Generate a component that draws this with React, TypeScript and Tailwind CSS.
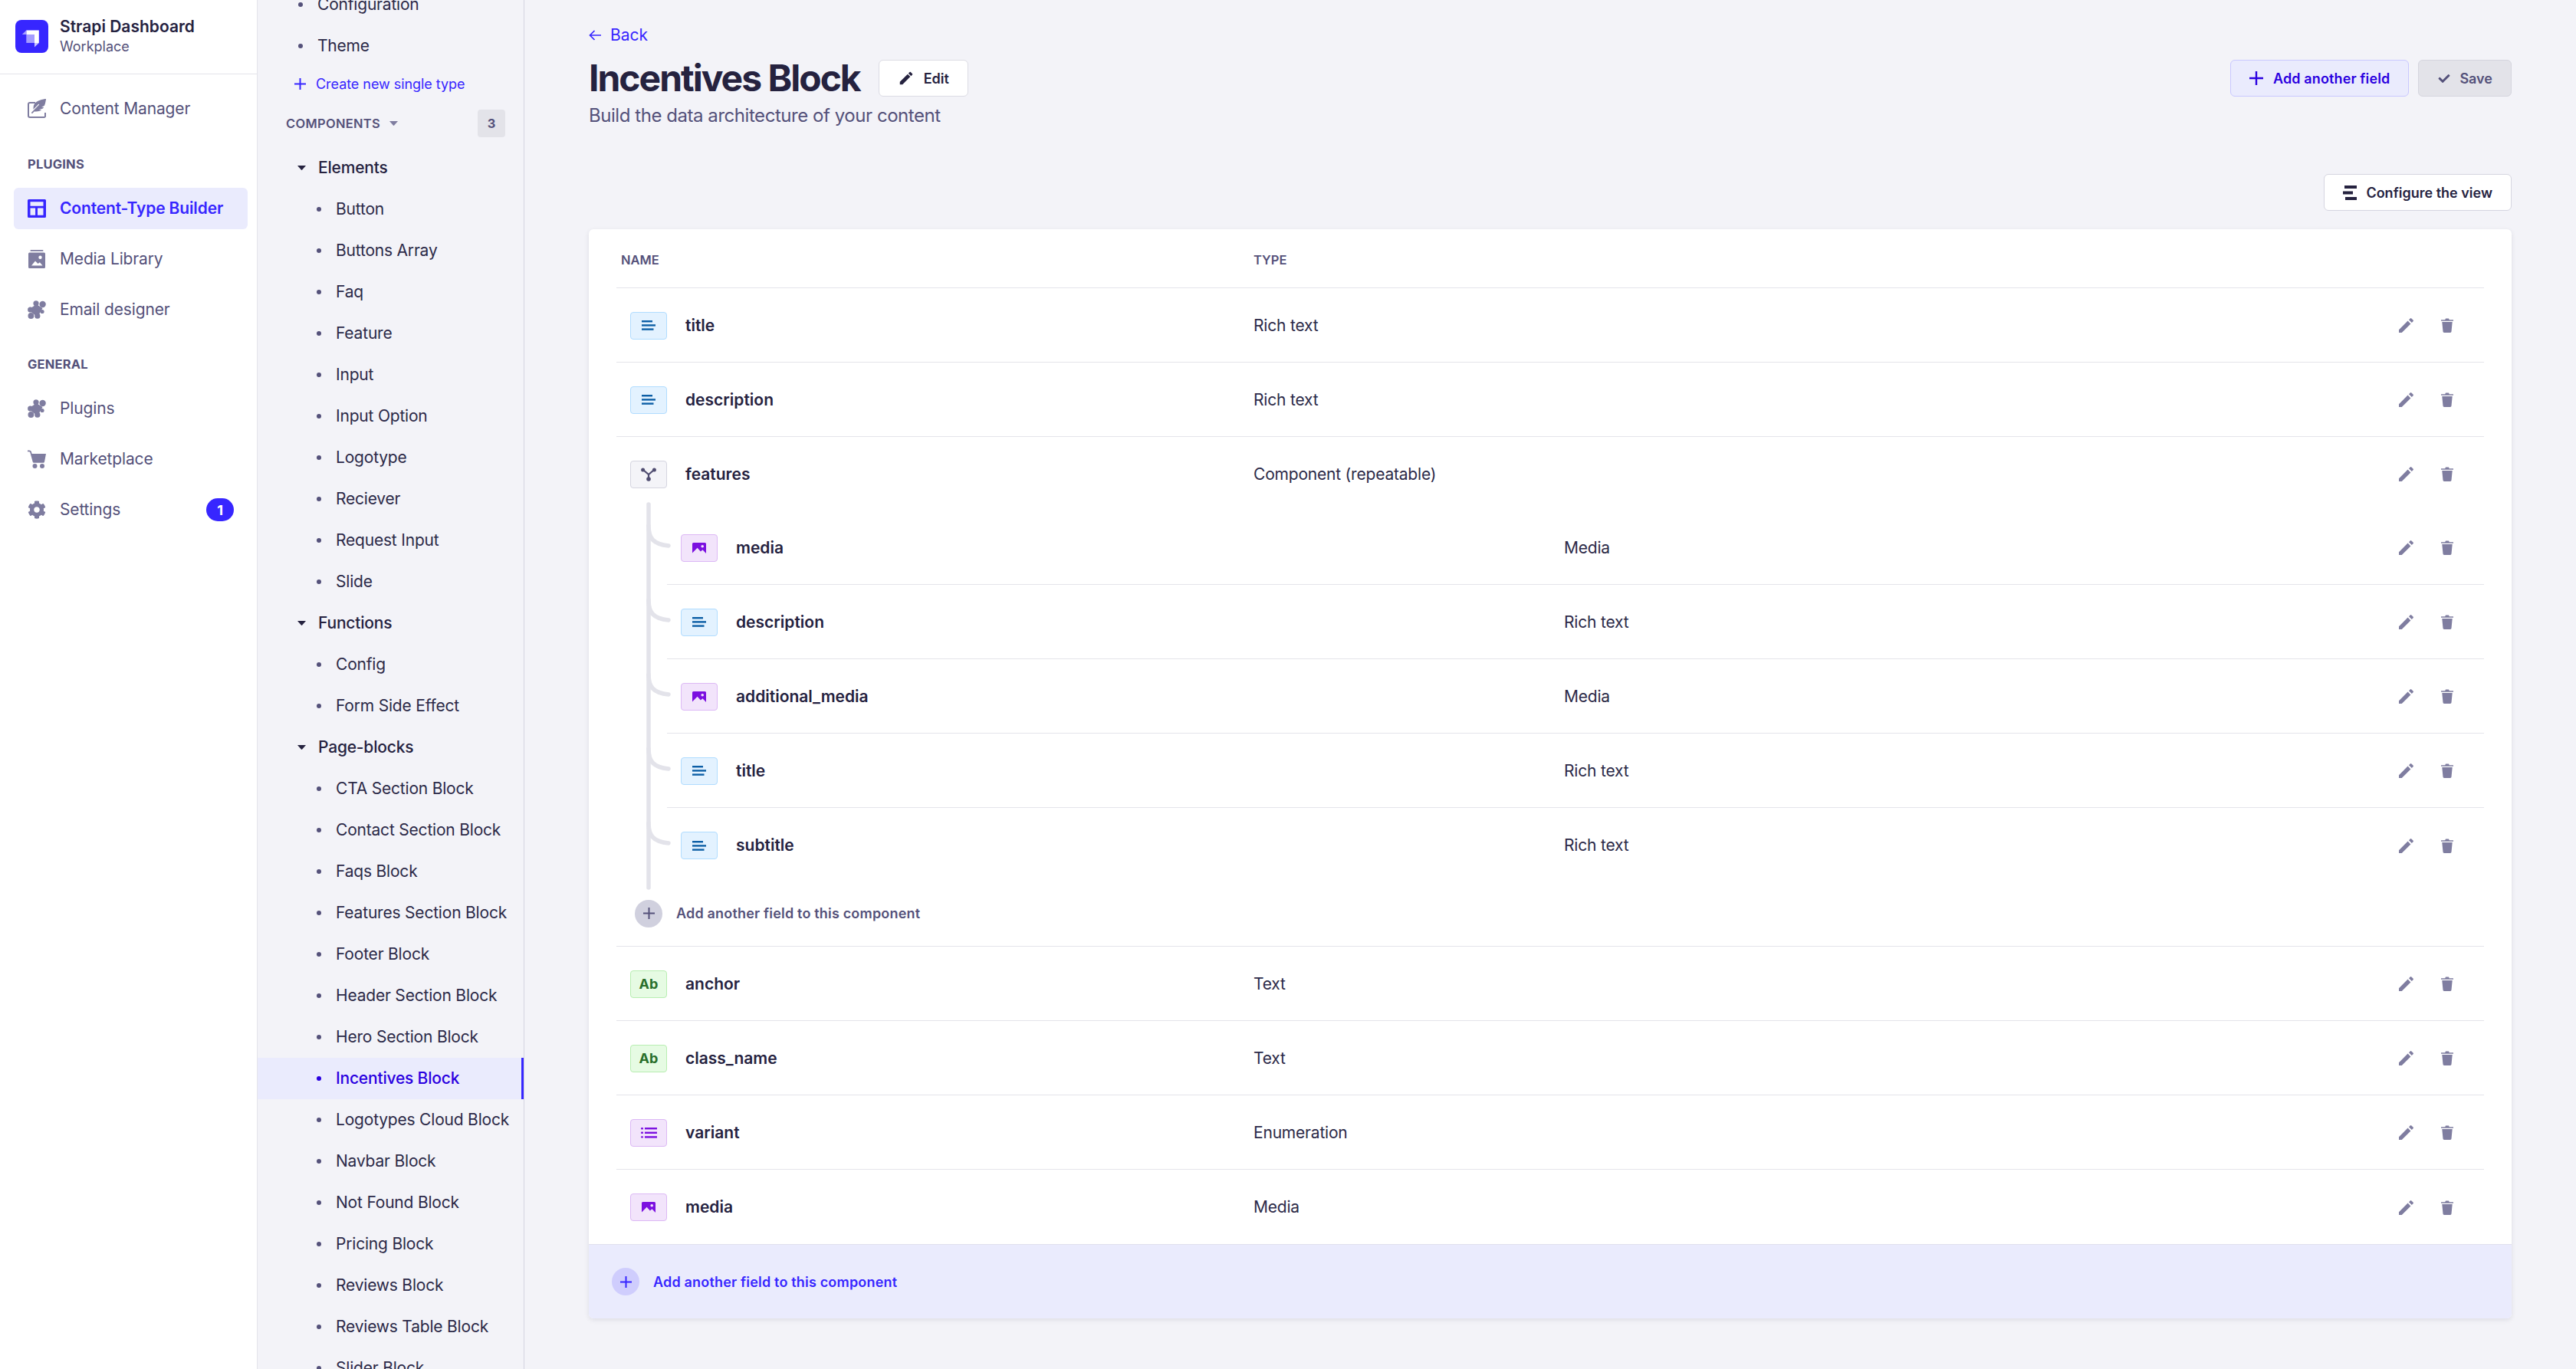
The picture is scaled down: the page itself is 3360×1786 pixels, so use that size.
import React from 'react';
import { FaCog, FaFeatherAlt, FaCheck } from 'react-icons/fa';
import { MdEdit } from 'react-icons/md';

type IconProps = { className?: string };

const Plus = ({ className }: IconProps) => (
  <svg viewBox="0 0 18 18" className={className} fill="currentColor"><path d="M7.8 0h2.4v7.8H18v2.4h-7.8V18H7.8v-7.8H0V7.8h7.8z" /></svg>
);
const Caret = ({ className }: IconProps) => (
  <svg viewBox="0 0 11 6" className={className} fill="currentColor"><path d="M0 0h11L6.2 5.6a1 1 0 0 1-1.4 0z" /></svg>
);
const Pencil = ({ className }: IconProps) => (
  <svg viewBox="0 0 19 19" className={className} fill="currentColor"><path d="M0 15.2 11.6 3.6l3.8 3.8L3.8 19H0zM13 2.2 14.7.5a1.2 1.2 0 0 1 1.7 0l2.1 2.1a1.2 1.2 0 0 1 0 1.7l-1.7 1.7z" /></svg>
);
const Trash = ({ className }: IconProps) => (
  <svg viewBox="0 0 16 19" className={className} fill="currentColor"><path d="M0 2.2h5.2L6 .6h4l.8 1.6H16v1.6H0zM1.3 5h13.4l-1.2 12.6a1.5 1.5 0 0 1-1.5 1.4H4a1.5 1.5 0 0 1-1.5-1.4z" /></svg>
);
const Bars = () => (
  <svg viewBox="0 0 18 13" className="w-[18px] h-[13px]" fill="#0d5fa6"><rect x="0" y="0" width="14" height="2.4" /><rect x="0" y="5.2" width="18" height="2.4" /><rect x="0" y="10.4" width="15.5" height="2.4" /></svg>
);
const MediaGlyph = () => (
  <svg viewBox="0 0 18 14" className="w-[18px] h-[14px]" fill="#7b10e0"><path fillRule="evenodd" d="M1.5 0h15A1.5 1.5 0 0 1 18 1.5V14l-4.6-4.8-2.5 2.3L6.6 6.8 0 13.4V1.5A1.5 1.5 0 0 1 1.5 0zM13.2 3a1.8 1.8 0 1 0 0 3.6 1.8 1.8 0 0 0 0-3.6z" /></svg>
);
const ListGlyph = () => (
  <svg viewBox="0 0 21 14" className="w-[21px] h-[14px]" fill="#7b10e0"><rect x="0" y="0" width="3" height="2.4" rx="1" /><rect x="0" y="5.6" width="3" height="2.4" rx="1" /><rect x="0" y="11.2" width="3" height="2.4" rx="1" /><rect x="5" y="0" width="16" height="2.4" /><rect x="5" y="5.6" width="16" height="2.4" /><rect x="5" y="11.2" width="16" height="2.4" /></svg>
);
const CompGlyph = () => (
  <svg viewBox="0 0 20 18" className="w-[20px] h-[18px]" fill="#4f4c70" stroke="#4f4c70"><path d="M3 3 10 9l7-6M10 9v6" strokeWidth="2.2" fill="none" /><circle cx="2.6" cy="3" r="2.5" stroke="none" /><circle cx="17.4" cy="3" r="2.5" stroke="none" /><circle cx="10" cy="15" r="2.8" stroke="none" /></svg>
);

const LayoutIcon = ({ className }: IconProps) => (
  <svg viewBox="0 0 24 24" className={className} fill="currentColor"><path fillRule="evenodd" d="M1.5 0h21A1.5 1.5 0 0 1 24 1.5v21a1.5 1.5 0 0 1-1.5 1.5h-21A1.5 1.5 0 0 1 0 22.500v-21A1.500 1.500 0 0 1 1.500 0zM3.500 3.200v5.600h17V3.200zM3.500 11.500v9.300h6.600v-9.300zM13 11.500v9.300h7.500v-9.300z" /></svg>
);
const MediaLib = ({ className }: IconProps) => (
  <svg viewBox="0 0 22 24" className={className} fill="currentColor"><rect x="2.500" y="0" width="17" height="1.800" rx="0.900" /><path fillRule="evenodd" d="M1.500 3.500h19A1.500 1.500 0 0 1 22 5v17.500a1.500 1.500 0 0 1-1.500 1.500h-19A1.500 1.500 0 0 1 0 22.500V5a1.500 1.500 0 0 1 1.500-1.500zM15.500 7.500a2.200 2.200 0 1 0 0 4.400 2.200 2.200 0 0 0 0-4.400zM4 20.500h14.500l-3.600-4.300-2.400 1.900-3.500-3.700z" /></svg>
);
const Cart = ({ className }: IconProps) => (
  <svg viewBox="0 0 24 24" className={className} fill="currentColor"><path d="M0 .5h2.200c1.400 0 2.400.8 2.800 2.200L5.600 5H24l-2 10.500a1.500 1.500 0 0 1-1.500 1.200H8.200a1.500 1.500 0 0 1-1.500-1.200L3.300 3.300C3.100 2.600 2.700 2.300 2 2.300H0z" /><circle cx="9.500" cy="21" r="3" /><circle cx="19" cy="21" r="3" /></svg>
);
const Puzzle = ({ className }: IconProps) => (
  <svg viewBox="0 0 24 24" className={className} fill="currentColor">
    <path d="M11.500 5 19.500 10 15 18 12 21 4.500 15 4 10z" />
    <circle cx="11" cy="3.800" r="3.600" />
    <circle cx="19.600" cy="5" r="4.200" />
    <circle cx="3.600" cy="12" r="3.500" />
    <circle cx="4.400" cy="20" r="3.900" />
    <circle cx="12.800" cy="20.200" r="3.600" />
    <circle cx="19" cy="14.500" r="2.600" />
  </svg>
);
const Write = ({ className }: IconProps) => (
  <span className={`relative block ${className}`}>
    <svg viewBox="0 0 24 24" className="absolute inset-0 w-full h-full" fill="none" stroke="currentColor" strokeWidth="2"><path d="M10 4H3a2 2 0 0 0-2 2v15a2 2 0 0 0 2 2h18a2 2 0 0 0 2-1v-5" /></svg>
    <FaFeatherAlt className="absolute left-[5px] -top-[1px] w-[19px] h-[19px]" />
  </span>
);
const StackIcon = ({ className }: IconProps) => (
  <svg viewBox="0 0 18 19" className={className} fill="currentColor"><rect x="2" y="0" width="16" height="4" /><rect x="0" y="7.500" width="13" height="4" /><rect x="3" y="15" width="15" height="4" /></svg>
);
const Logo = () => (
  <svg viewBox="0 0 43 43" className="w-[43px] h-[43px] shrink-0">
    <rect width="43" height="43" rx="8" fill="#3726ff" />
    <path d="M14.300 13.500H30.800V30H25V19H14.300z" fill="#ffffff" />
    <path d="M14.300 19H25V30H14.300z" fill="#a49cff" />
    <path d="M14.300 13.500V19H8.800z" fill="#a49cff" />
    <path d="M25 30h5.800L25 35.500z" fill="#c9c4ff" />
  </svg>
);

const NavRow = ({ icon, label, active, badge }: { icon: React.ReactNode; label: string; active?: boolean; badge?: string }) => (
  <div className={`h-[54px] rounded-[6px] flex items-center gap-[18px] pl-[18px] pr-[18px] text-[21px] tracking-[-0.15px] ${active ? 'bg-[#eaebfd] text-[#3726ff] font-semibold' : 'text-[#54517a]'}`}>
    <span className={`w-[24px] h-[24px] flex items-center justify-center shrink-0 ${active ? 'text-[#3726ff]' : 'text-[#7f7da0]'}`}>{icon}</span>
    <span className="flex-1">{label}</span>
    {badge && <span className="w-[36px] h-[30px] rounded-full bg-[#3726ff] text-white text-[18px] font-bold flex items-center justify-center">{badge}</span>}
  </div>
);
const NavLabel = ({ children }: { children: string }) => (
  <div className="h-[24px] px-[18px] flex items-center text-[16.5px] font-bold tracking-[0.2px] text-[#54517a]">{children}</div>
);

const SubItem = ({ label, nested, active }: { label: string; nested?: boolean; active?: boolean }) => (
  <div className={`h-[54px] flex items-center text-[21px] tracking-[-0.2px] ${nested ? 'pl-[81px]' : 'pl-[57px]'} ${active ? 'bg-[#eaebfd] text-[#2a00e0] font-medium border-r-[3px] border-[#3726ff]' : 'text-[#2c2a48]'}`}>
    <span className={`w-[6px] h-[6px] rounded-full mr-[19px] ml-[-4px] ${active ? 'bg-[#2a00e0]' : 'bg-[#54517a]'}`} />
    <span className="whitespace-nowrap">{label}</span>
  </div>
);
const SubGroup = ({ label }: { label: string }) => (
  <div className="h-[54px] flex items-center pl-[52px] text-[21px] font-medium tracking-[-0.2px] text-[#25223f]">
    <Caret className="w-[11px] h-[6px] mr-[16px] text-[#25223f]" />
    <span>{label}</span>
  </div>
);

const tint = {
  blue: 'bg-[#e3f2ff] border-[#b0dcff]',
  purple: 'bg-[#f2e4fb] border-[#dcb8f5]',
  green: 'bg-[#e6fbe3] border-[#b8eeb1]',
  gray: 'bg-[#f4f4f8] border-[#d5d5e0]',
};
type Kind = 'text' | 'media' | 'ab' | 'enum' | 'comp';
const TypeBox = ({ kind }: { kind: Kind }) => {
  const cls = kind === 'text' ? tint.blue : kind === 'ab' ? tint.green : kind === 'comp' ? tint.gray : tint.purple;
  return (
    <span className={`w-[48px] h-[36px] rounded-[4px] border-[1.5px] flex items-center justify-center shrink-0 ${cls}`}>
      {kind === 'text' && <Bars />}
      {kind === 'media' && <MediaGlyph />}
      {kind === 'enum' && <ListGlyph />}
      {kind === 'comp' && <CompGlyph />}
      {kind === 'ab' && <span className="text-[18px] font-bold text-[#2a6f2b]">Ab</span>}
    </span>
  );
};

const Actions = () => (
  <div className="flex items-center gap-[36px] text-[#7f7da0] pr-[40px]">
    <Pencil className="w-[19px] h-[19px]" />
    <Trash className="w-[16px] h-[19px]" />
  </div>
);

const Field = ({ kind, name, type, nested, border = true, tall }: { kind: Kind; name: string; type: string; nested?: boolean; border?: boolean; tall?: boolean }) => (
  <div className={`${tall ? 'h-[96px]' : 'h-[97px]'} pt-[1px] grid items-center ${nested ? 'grid-cols-[1170px_1fr_auto]' : 'grid-cols-[831px_1fr_auto]'} ${border ? 'border-b-[1.5px] border-[#e4e4ea]' : ''}`}>
    <div className="flex items-center gap-[24px] pl-[18px]">
      <TypeBox kind={kind} />
      <span className="text-[21px] font-semibold text-[#25223f]">{name}</span>
    </div>
    <span className="text-[21px] tracking-[-0.2px] text-[#2c2a48]">{type}</span>
    <Actions />
  </div>
);

const treeYs = [45, 142, 239, 336, 433];

const Tree = () => (
  <svg className="absolute left-[39px] top-[-11px] w-[36px] h-[506px]" viewBox="0 0 36 506" fill="none" stroke="#e3e3ea" strokeWidth="5.500" strokeLinecap="round">
    <path d="M3 3V503" />
    {treeYs.map((y) => (
      <path key={y} d={`M3 ${y - 14} C3 ${y + 2} 9 ${y + 10} 29 ${y + 12}`} />
    ))}
  </svg>
);

export default function App() {
  return (
    <div className="h-[1786px] overflow-hidden flex bg-[#f3f3f8] font-['Inter',sans-serif]">
      <nav className="w-[336px] shrink-0 bg-white border-r-[1.5px] border-[#e4e4ea]">
        <div className="h-[97px] border-b-[1.5px] border-[#e4e4ea] flex items-center gap-[15px] pl-[20px] pb-[1px]">
          <Logo />
          <div className="flex flex-col gap-[1px] pb-[1px]">
            <span className="text-[21px] leading-[26px] font-semibold text-[#25223f]">Strapi Dashboard</span>
            <span className="text-[18px] leading-[23px] text-[#54517a]">Workplace</span>
          </div>
        </div>
        <div className="pl-[18px] pr-[12px] pt-[18px]">
          <NavRow icon={<Write className="w-[24px] h-[24px]" />} label="Content Manager" />
          <div className="mt-[33px] mb-[19px]"><NavLabel>PLUGINS</NavLabel></div>
          <div className="flex flex-col gap-[12px]">
            <NavRow active icon={<LayoutIcon className="w-[24px] h-[24px]" />} label="Content-Type Builder" />
            <NavRow icon={<MediaLib className="w-[22px] h-[24px]" />} label="Media Library" />
            <NavRow icon={<Puzzle className="w-[24px] h-[24px]" />} label="Email designer" />
          </div>
          <div className="mt-[32px] mb-[19px]"><NavLabel>GENERAL</NavLabel></div>
          <div className="flex flex-col gap-[12px]">
            <NavRow icon={<Puzzle className="w-[24px] h-[24px]" />} label="Plugins" />
            <NavRow icon={<Cart className="w-[24px] h-[24px]" />} label="Marketplace" />
            <NavRow icon={<FaCog className="w-[24px] h-[24px]" />} label="Settings" badge="1" />
          </div>
        </div>
      </nav>

      <aside className="w-[348px] shrink-0 border-r-[1.5px] border-[#d5d5e0] overflow-hidden">
        <div className="-mt-[21px]">
          <SubItem label="Configuration" />
          <SubItem label="Theme" />
          <div className="h-[45px] flex items-center gap-[13px] pl-[48px] text-[18px] tracking-[-0.05px] text-[#3726ff]">
            <Plus className="w-[15px] h-[15px]" />
            <span>Create new single type</span>
          </div>
          <div className="h-[60px] flex items-center pl-[37px] pr-[24px] pb-[2px]">
            <span className="text-[16.5px] font-semibold tracking-[0.3px] text-[#54517a]">COMPONENTS</span>
            <Caret className="w-[11px] h-[6px] ml-[12px] text-[#7f7da0]" />
            <span className="ml-auto w-[36px] h-[36px] rounded-[4px] bg-[#e3e3e9] text-[#54517a] text-[16.5px] font-bold flex items-center justify-center">3</span>
          </div>
          <SubGroup label="Elements" />
          {['Button', 'Buttons Array', 'Faq', 'Feature', 'Input', 'Input Option', 'Logotype', 'Reciever', 'Request Input', 'Slide'].map((l) => (
            <SubItem key={l} nested label={l} />
          ))}
          <SubGroup label="Functions" />
          {['Config', 'Form Side Effect'].map((l) => (
            <SubItem key={l} nested label={l} />
          ))}
          <SubGroup label="Page-blocks" />
          {['CTA Section Block', 'Contact Section Block', 'Faqs Block', 'Features Section Block', 'Footer Block', 'Header Section Block', 'Hero Section Block'].map((l) => (
            <SubItem key={l} nested label={l} />
          ))}
          <SubItem nested active label="Incentives Block" />
          {['Logotypes Cloud Block', 'Navbar Block', 'Not Found Block', 'Pricing Block', 'Reviews Block', 'Reviews Table Block', 'Slider Block'].map((l) => (
            <SubItem key={l} nested label={l} />
          ))}
        </div>
      </aside>

      <main className="flex-1 min-w-0 px-[84px] pt-[31px]">
        <header className="flex justify-between">
          <div>
            <div className="h-[30px] flex items-center gap-[12px] text-[21px] text-[#3726ff]">
              <svg viewBox="0 0 16 14" className="w-[16px] h-[14px]" fill="none" stroke="currentColor" strokeWidth="1.700"><path d="M16 7H1.500M7.500 1 1.500 7l6 6" /></svg>
              <span>Back</span>
            </div>
            <div className="mt-[17px] h-[48px] flex items-center gap-[24px]">
              <h1 className="text-[48px] leading-[48px] font-bold text-[#25223f] tracking-[-2px]">Incentives Block</h1>
              <span className="h-[48px] px-[24px] rounded-[6px] bg-white border-[1.5px] border-[#dcdce4] flex items-center gap-[12px] text-[18px] font-semibold text-[#25223f]">
                <MdEdit className="w-[22px] h-[22px]" />
                Edit
              </span>
            </div>
            <p className="mt-[7px] h-[36px] flex items-center text-[24px] tracking-[-0.45px] text-[#54517a]">Build the data architecture of your content</p>
          </div>
          <div className="mt-[47px] flex gap-[12px] h-[48px]">
            <span className="px-[24px] rounded-[6px] bg-[#eaebfd] border-[1.5px] border-[#c9c8ff] flex items-center gap-[13px] text-[18px] font-semibold tracking-[0.12px] text-[#2a00e0]">
              <Plus className="w-[18px] h-[18px]" />
              Add another field
            </span>
            <span className="px-[24px] rounded-[6px] bg-[#e3e3e9] border-[1.5px] border-[#d5d5de] flex items-center gap-[11px] text-[18px] font-semibold text-[#54517a]">
              <FaCheck className="w-[18px] h-[15px]" />
              Save
            </span>
          </div>
        </header>

        <div className="mt-[58px] flex justify-end">
          <span className="h-[48px] px-[24px] rounded-[6px] bg-white border-[1.5px] border-[#d5d5e0] flex items-center gap-[12px] text-[18px] font-semibold text-[#25223f]">
            <StackIcon className="w-[18px] h-[19px]" />
            Configure the view
          </span>
        </div>

        <section className="mt-[24px] bg-white rounded-[6px] overflow-hidden shadow-[0_2px_6px_rgba(33,33,52,0.1)]">
          <div className="px-[36px]">
            <div className="h-[77px] grid grid-cols-[831px_1fr] items-center border-b-[1.5px] border-[#e4e4ea] text-[16.5px] font-semibold text-[#54517a] pt-[4px]">
              <span className="pl-[6px]">NAME</span>
              <span>TYPE</span>
            </div>
            <Field kind="text" name="title" type="Rich text" />
            <Field kind="text" name="description" type="Rich text" />
            <Field kind="comp" name="features" type="Component (repeatable)" border={false} tall />
            <div className="relative border-b-[1.5px] border-[#e4e4ea]">
              <Tree />
              <div className="ml-[66px]">
                <Field nested kind="media" name="media" type="Media" />
                <Field nested kind="text" name="description" type="Rich text" />
                <Field nested kind="media" name="additional_media" type="Media" />
                <Field nested kind="text" name="title" type="Rich text" />
                <Field nested kind="text" name="subtitle" type="Rich text" border={false} />
              </div>
              <div className="h-[83px] flex items-center gap-[18px] pl-[24px] pb-[2px]">
                <span className="w-[36px] h-[36px] rounded-full bg-[#d0d0de] text-[#54517a] flex items-center justify-center">
                  <Plus className="w-[15px] h-[15px]" />
                </span>
                <span className="text-[18px] font-semibold tracking-[0.18px] text-[#54517a]">Add another field to this component</span>
              </div>
            </div>
            <Field kind="ab" name="anchor" type="Text" />
            <Field kind="ab" name="class_name" type="Text" />
            <Field kind="enum" name="variant" type="Enumeration" />
            <Field kind="media" name="media" type="Media" border={false} />
          </div>
          <div className="h-[97px] bg-[#eaebfd] border-t-[1.5px] border-[#e0e0ee] flex items-center gap-[18px] pl-[30px]">
            <span className="w-[36px] h-[36px] rounded-full bg-[#cfcdfd] text-[#3726ff] flex items-center justify-center">
              <Plus className="w-[15px] h-[15px]" />
            </span>
            <span className="text-[18px] font-semibold tracking-[0.18px] text-[#3726ff]">Add another field to this component</span>
          </div>
        </section>
      </main>
    </div>
  );
}
